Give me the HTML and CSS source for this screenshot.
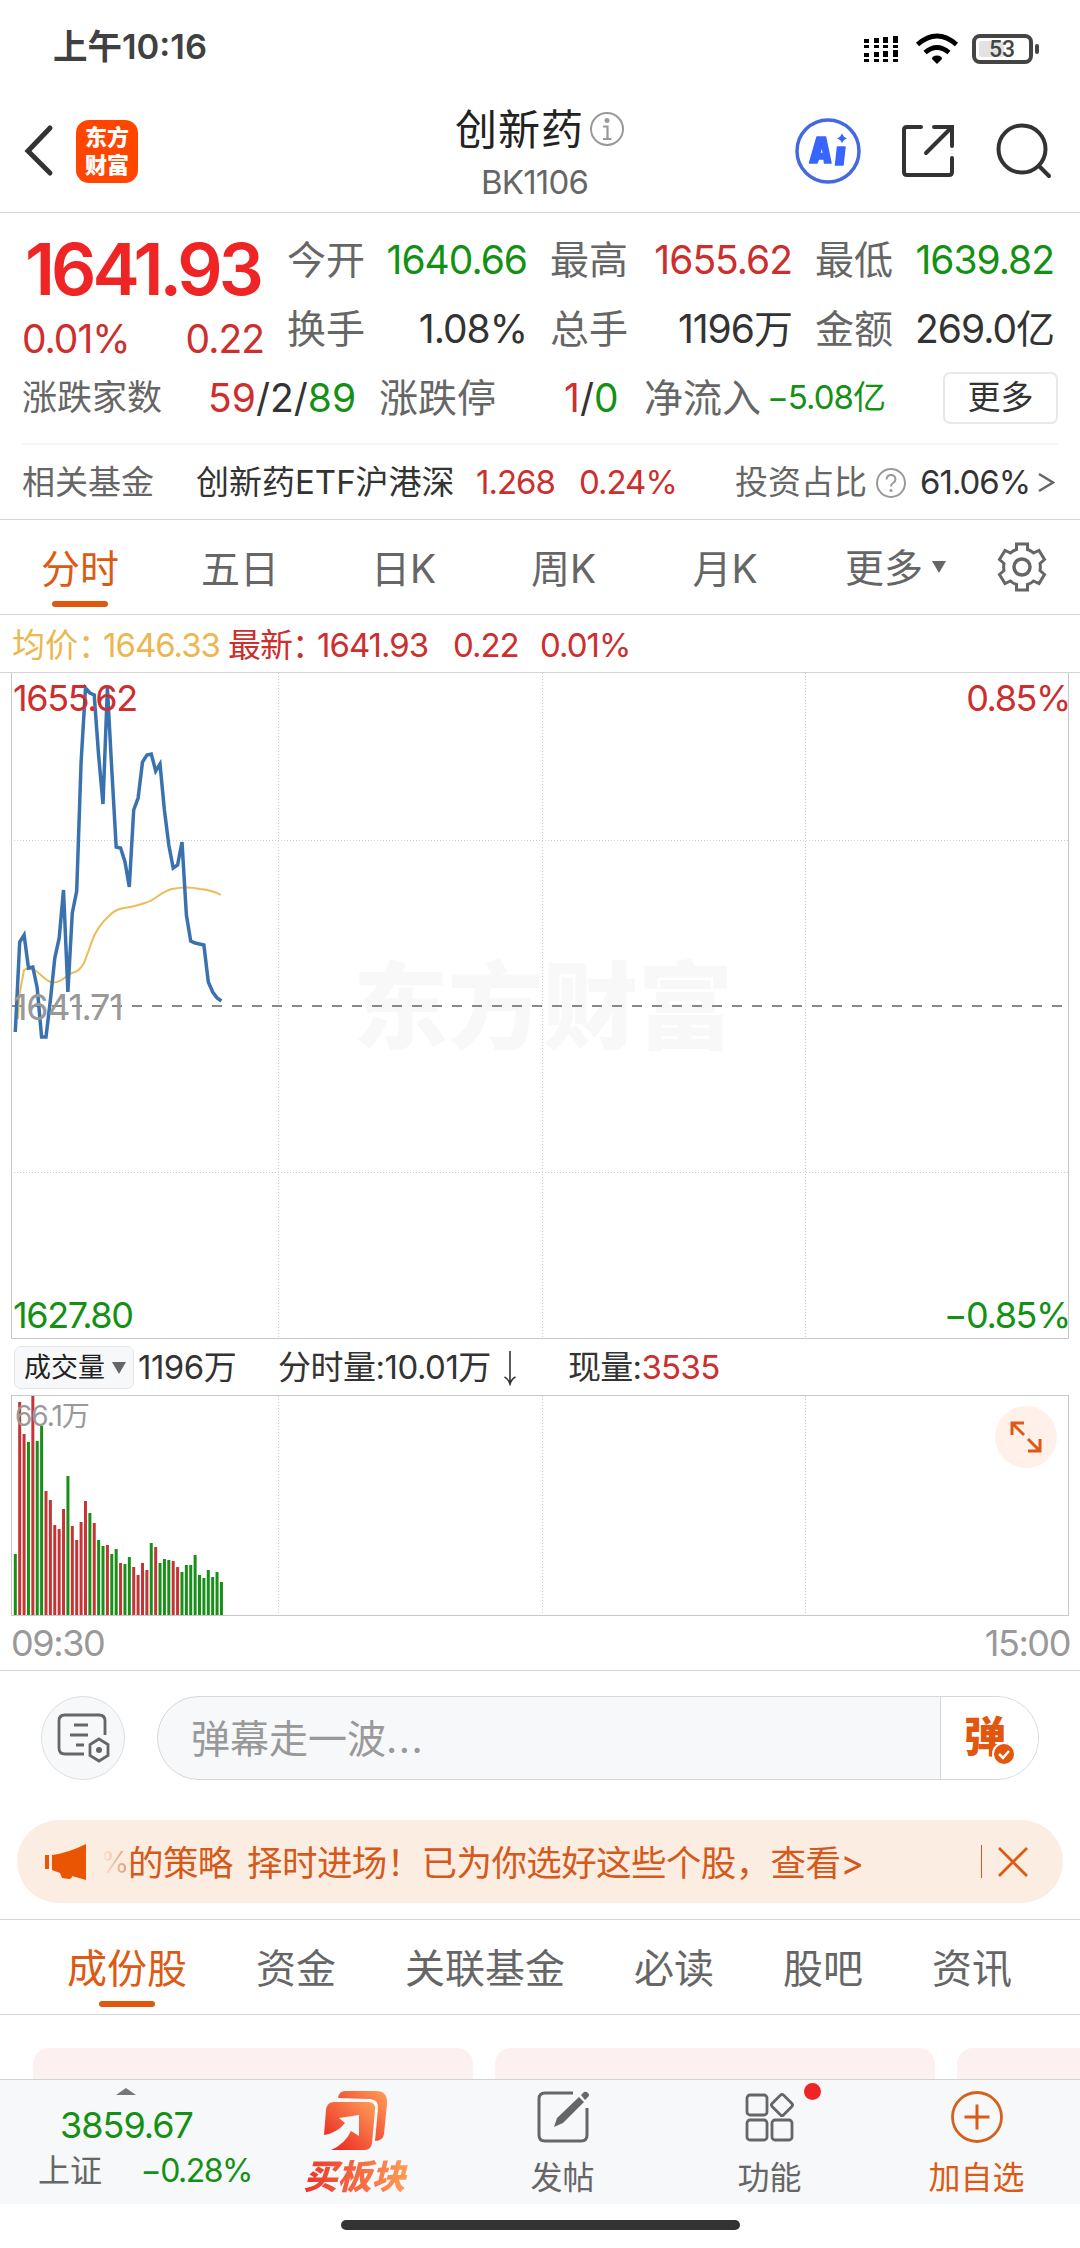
FILE: index.html
```html
<!DOCTYPE html>
<html lang="zh-CN">
<head>
  <meta charset="UTF-8">
  <title>创新药 BK1106</title>
  <link rel="stylesheet" href="styles.css">
</head>
<body>

  <div class="status">
    <span class="time">上午10:16</span>
    <svg class="status-icons" width="180" height="34" viewBox="0 0 180 34">
      <g fill="#000">
        <path d="M1 8h5v4h-5zM1 14h5v3h-5zM1 22h5v4h-5zM1 28h5v3h-5zM11 7h5v5h-5zM11 14h5v3h-5zM11 21h5v5h-5zM11 28h5v3h-5zM20 6h5v6h-5zM20 14h5v3h-5zM20 20h5v6h-5zM20 28h5v3h-5zM30 5h5v7h-5zM30 14h5v3h-5zM30 19h5v7h-5zM30 28h5v3h-5z"/>
        <path d="M74 33l-5-5q0-3.500 5-3.500t5 3.500z"/>
      </g>
      <path d="M54.500 13.500q19.500-17 39 0M62 21.500q12-10 24 0" fill="none" stroke="#000" stroke-width="4.800"/>
      <rect x="111" y="5" width="57" height="26" rx="6" fill="none" stroke="#444" stroke-width="4"/>
      <rect x="116" y="10" width="25" height="16" rx="2" fill="#e2e2e2"/>
      <rect x="172" y="13" width="4" height="10" rx="2" fill="#444"/>
      <text x="139" y="26" class="battery-text">53</text>
    </svg>
  </div>

  <div class="header">
    <svg class="back" width="32" height="54" viewBox="0 0 32 54"><path d="M28 4L6 27l22 22" fill="none" stroke="#333" stroke-width="5" stroke-linecap="round"/></svg>
    <div class="logo">东方<br>财富</div>
    <div class="title">
      <div class="name">创新药
        <svg width="36" height="36" viewBox="0 0 36 36"><circle cx="18" cy="18" r="16" fill="none" stroke="#999" stroke-width="2"/><circle cx="18" cy="9.500" r="2.500" fill="#999"/><path d="M14 15.500h4.500V28M14 28h8.500" fill="none" stroke="#999" stroke-width="2.200"/></svg>
      </div>
      <div class="code">BK1106</div>
    </div>
    <div class="header-icons">
      <svg width="66" height="66" viewBox="0 0 66 66">
        <circle cx="33" cy="33" r="31" fill="none" stroke="#4468e0" stroke-width="3.500"/>
        <path fill="#3765fd" stroke="#3765fd" stroke-width="1.500" stroke-linejoin="round" fill-rule="evenodd" d="M22 19h8.500l5.500 26h-6.500l-.5-4h-5.500l-1.500 4h-7.500zM27 27.500l-2.300 8h3.600zM42.500 29h7.500l-2 18h-7.500z"/>
        <path fill="#3765fd" d="M47 15q1 4 5 5.500q-4 1-5 5q-1-4-5-5q4-1.500 5-5.500z"/>
      </svg>
      <svg width="54" height="54" viewBox="0 0 54 54"><path d="M20 3H6q-3 0-3 3v42q0 3 3 3h42q3 0 3-3V34M33 3h18v19M50 4L25 29" fill="none" stroke="#333" stroke-width="4" stroke-linecap="round"/></svg>
      <svg width="56" height="56" viewBox="0 0 56 56"><circle cx="26" cy="26" r="23.500" fill="none" stroke="#333" stroke-width="4"/><path d="M43 43l10 10" stroke="#333" stroke-width="4" stroke-linecap="round"/></svg>
    </div>
  </div>

  <div class="quote">
    <div class="quote-top">
      <div class="price-box">
        <div class="price">1641.93</div>
        <div class="change red"><span>0.01%</span><span>0.22</span></div>
      </div>
      <div class="col">
        <div class="cell"><label>今开</label><span class="green">1640.66</span></div>
        <div class="cell"><label>换手</label><span>1.08%</span></div>
      </div>
      <div class="col">
        <div class="cell"><label>最高</label><span class="red">1655.62</span></div>
        <div class="cell"><label>总手</label><span>1196万</span></div>
      </div>
      <div class="col">
        <div class="cell"><label>最低</label><span class="green">1639.82</span></div>
        <div class="cell"><label>金额</label><span>269.0亿</span></div>
      </div>
    </div>
    <div class="quote-more">
      <label class="updown">涨跌家数</label>
      <span class="counts"><span class="red">59</span>/2/<span class="green">89</span></span>
      <label class="limit">涨跌停</label>
      <span class="limit-value"><span class="red">1</span>/<span class="green">0</span></span>
      <label>净流入</label>
      <span class="flow green">−5.08亿</span>
      <button class="more-btn">更多</button>
    </div>
    <div class="fund">
      <label>相关基金</label>
      <span class="fund-name">创新药ETF沪港深</span>
      <span class="red fund-price">1.268</span>
      <span class="red fund-change">0.24%</span>
      <label class="ratio">投资占比</label>
      <svg width="32" height="32" viewBox="0 0 32 32"><circle cx="16" cy="16" r="14" fill="none" stroke="#999" stroke-width="2"/><path d="M11.500 12.500q.5-4.500 4.500-4.500t4.500 4q0 2.500-2.500 4q-2 1.300-2 3.500" fill="none" stroke="#999" stroke-width="2"/><circle cx="16" cy="23.500" r="1.500" fill="#999"/></svg>
      <span class="fund-ratio">61.06%</span>
      <svg class="arrow" width="17" height="22" viewBox="0 0 17 22"><path d="M1 2l14 8.500L1 19" fill="none" stroke="#666" stroke-width="2.500"/></svg>
    </div>
  </div>

  <div class="period-tabs">
    <div class="tab active">分时</div>
    <div class="tab">五日</div>
    <div class="tab">日K</div>
    <div class="tab">周K</div>
    <div class="tab">月K</div>
    <div class="tab tab-more">更多<i class="caret"></i></div>
    <svg class="gear" width="50" height="52" viewBox="0 0 50 52">
      <path d="M19.500 3h11v5.500q3.500 1 6 3.500l5.500-2.500l5.500 9l-4.500 4q.7 3.500 0 7l4.500 4l-5.500 9l-5.500-2.500q-2.500 2.500-6 3.500v5.500h-11v-5.500q-3.500-1-6-3.500l-5.500 2.500l-5.500-9l4.500-4q-.7-3.500 0-7l-4.500-4l5.500-9l5.500 2.500q2.500-2.500 6-3.500z" fill="none" stroke="#666" stroke-width="3"/>
      <circle cx="25" cy="26" r="8" fill="none" stroke="#666" stroke-width="3.500"/>
    </svg>
  </div>

  <div class="legend">
    <span class="yellow">均价：</span><span class="yellow avg">1646.33</span>
    <span class="red">最新：</span><span class="red last">1641.93</span><span class="red diff">0.22</span><span class="red">0.01%</span>
  </div>

  <div class="chart">
    <div class="watermark">东方财富</div>
    <svg width="1057" height="666" viewBox="0 0 1057 666">
      <path class="grid-line" d="M266.500 0V666M530.500 0V666M793.500 0V666M2 167.500H1056M2 499.500H1056"/>
      <path class="base-line" d="M0 333H1056"/>
      <path class="avg-line" id="avgLine" d="M6 346L7 324L12 297Q16 294 24 298C30 302 34 309 41 309.500C50 310 54 302 60 300Q67 299 72 290L82 263Q88 251 96 244Q103 236 112 235T133 230C144 227 148 219 160 216Q175 213 188 216Q200 217 209 222"/>
      <path class="price-line" id="priceLine"/>
    </svg>
    <span class="label top-left red">1655.62</span>
    <span class="label mid-left">1641.71</span>
    <span class="label bottom-left green">1627.80</span>
    <span class="label top-right red">0.85%</span>
    <span class="label bottom-right green">−0.85%</span>
  </div>

  <div class="volume-info">
    <span class="chip">成交量<i class="caret"></i></span>
    <span class="vol-total">1196万</span>
    <span class="vol-minute">分时量:10.01万</span>
    <svg class="down" width="14" height="36" viewBox="0 0 14 36"><path d="M7 1v32M1.500 27q4 2 5.500 7q1.500-5 5.500-7" fill="none" stroke="#333" stroke-width="1.600"/></svg>
    <span class="vol-now">现量:<span class="red">3535</span></span>
  </div>

  <div class="volume">
    <svg id="volume" width="1057" height="219" viewBox="0 0 1057 219">
      <path class="grid-line" d="M266.500 0V219M530.500 0V219M793.500 0V219"/>
    </svg>
    <span class="vol-label">66.1万</span>
    <div class="expand">
      <svg width="32" height="32" viewBox="0 0 32 32"><path d="M2 14V2h12M2 2l12 12M30 18v12H18M30 30L18 18" fill="none" stroke="#dd5a14" stroke-width="3"/></svg>
    </div>
  </div>
  <div class="hours"><span>09:30</span><span>15:00</span></div>

  <div class="danmu">
    <div class="danmu-set">
      <svg width="54" height="52" viewBox="0 0 54 52">
        <path d="M28 42H9q-6 0-6-6V9q0-6 6-6h34q6 0 6 6v14M18 13h14M14 23h18M20 33h8" fill="none" stroke="#666" stroke-width="2.800"/>
        <path d="M43 27l9 5.500v11L43 49l-9-5.500v-11z" fill="none" stroke="#666" stroke-width="2.800"/><circle cx="43" cy="38" r="3" fill="#666"/>
      </svg>
    </div>
    <div class="danmu-input">
      <span>弹幕走一波<span class="dots">...</span></span>
      <div class="danmu-btn">弹
        <svg class="check" width="24" height="24" viewBox="0 0 24 24"><circle cx="12" cy="12" r="11" fill="#e2560d" stroke="#fff" stroke-width="2"/><path d="M7 12l4 4l6-7" fill="none" stroke="#fff" stroke-width="2.500"/></svg>
      </div>
    </div>
  </div>

  <div class="banner">
    <svg width="44" height="40" viewBox="0 0 44 40"><path d="M1 13h4v14H1zM8 13q16-2 34-11v36l-14-4q0 3-3 3l-7-1l-2-5l-8-3z" fill="#ea5504"/></svg>
    <span class="fade">%</span><span class="banner-text">的策略 择时进场！已为你选好这些个股，查看&gt;</span>
    <i class="bar"></i>
    <svg width="30" height="30" viewBox="0 0 30 30"><path d="M1 1l28 28M29 1L1 29" stroke="#dd5a14" stroke-width="2.800"/></svg>
  </div>

  <div class="content-tabs">
    <div class="tab active">成份股</div>
    <div class="tab">资金</div>
    <div class="tab">关联基金</div>
    <div class="tab">必读</div>
    <div class="tab">股吧</div>
    <div class="tab">资讯</div>
  </div>

  <div class="cards">
    <div class="card"></div>
    <div class="card"></div>
    <div class="card"></div>
  </div>

  <div class="nav">
    <div class="index">
      <i class="up"></i>
      <div class="index-value green">3859.67</div>
      <div class="index-row"><span>上证</span><span class="green index-change">−0.28%</span></div>
    </div>
    <div class="nav-item buy">
      <svg width="66" height="62" viewBox="0 0 66 62">
        <defs><linearGradient id="g" x1="0" y1="1" x2="1" y2="0"><stop offset="0.150" stop-color="#ec3026"/><stop offset="1" stop-color="#ff9f58"/></linearGradient></defs>
        <path d="M15 8q1-7 7-7h31q12 0 11 13l-3 30q-1 7-9 7l3-32q1-10-9-10z" fill="url(#g)"/>
        <path d="M3 20q1-8 8-8h34q8 0 7 8l-3 33q-1 7-7 7H8Q22 54 28 41l8 5V25l-20 3l6 5Q14 43 1 45z" fill="url(#g)"/>
      </svg>
      <span class="buy-text">买板块</span>
    </div>
    <div class="nav-item">
      <svg width="54" height="54" viewBox="0 0 54 54"><path d="M37 3H9q-6 0-6 6v36q0 6 6 6h36q6 0 6-6V18" fill="none" stroke="#666" stroke-width="3"/><path d="M43 7l5 5l-21 21l-9 4l3-9zM45 5l3-3q2-1 4 1t0 4l-3 3z" fill="#666"/></svg>
      <span>发帖</span>
    </div>
    <div class="nav-item">
      <svg width="54" height="54" viewBox="0 0 54 54"><g fill="none" stroke="#666" stroke-width="2.800"><rect x="4" y="5" width="20" height="20" rx="3"/><rect x="4" y="30" width="20" height="20" rx="3"/><rect x="29" y="30" width="20" height="20" rx="3"/><rect x="31" y="7" width="16" height="16" rx="2" transform="rotate(45 39 15)"/></g></svg>
      <span>功能</span>
      <i class="dot"></i>
    </div>
    <div class="nav-item add">
      <svg width="54" height="54" viewBox="0 0 54 54"><circle cx="27" cy="27" r="24.500" fill="none" stroke="#d4621f" stroke-width="2.800"/><path d="M27 14.500v25M14.500 27h25" stroke="#dd5a14" stroke-width="3"/></svg>
      <span>加自选</span>
    </div>
  </div>
  <div class="home"></div>

  <script src="chart.js"></script>
</body>
</html>
```

FILE: styles.css
```css
body {
  margin: 0;
  width: 1080px;
  height: 2248px;
  overflow: hidden;
  background: #fff;
  color: #333;
  font-family: Inter, "Noto Sans CJK SC", sans-serif;
  font-size: 39px;
  line-height: 1;
}

* {
  box-sizing: border-box;
}

svg {
  display: block;
  flex: none;
}

span, label {
  white-space: nowrap;
}

label {
  color: #666;
}

.red { color: #cd2e2e; }
.green { color: #149114; }
.yellow { color: #ecb750; }

/* status bar */
.status {
  height: 90px;
  padding: 5px 37px 0 53px;
  display: flex;
  align-items: center;
  justify-content: space-between;
}

.time {
  font-size: 34.5px;
  font-weight: 600;
  color: #404040;
}

.battery-text {
  font-family: Roboto, sans-serif;
  font-size: 23px;
  font-weight: 500;
  text-anchor: middle;
  fill: #444;
}

/* header */
.header {
  height: 123px;
  border-bottom: 1px solid #d5d5d5;
  display: flex;
  align-items: center;
  padding: 0 28px 0 22px;
}

.back {
  margin-right: 22px;
}

.logo {
  width: 62px;
  height: 63px;
  border-radius: 13px;
  background: #ff4500;
  color: #fff;
  font-size: 22px;
  font-weight: 900;
  line-height: 28px;
  padding-top: 3px;
  text-align: center;
}

.title {
  width: 250px;
  margin-left: 272px;
  padding: 3px 0 0 45px;
}

.name {
  display: flex;
  align-items: center;
  font-size: 42px;
  letter-spacing: 1px;
  line-height: 56px;
  color: #222;
}

.name svg {
  margin: -2px 0 0 5px;
}

.code {
  font-size: 33px;
  letter-spacing: -0.8px;
  line-height: 44px;
  padding: 2px 0 0 26px;
  color: #666;
}

.header-icons {
  margin-left: auto;
  display: flex;
  align-items: center;
  gap: 40px;
}

.header-icons svg:nth-child(2) {
  margin-right: 1px;
}

/* quote */
.quote {
  height: 307px;
  padding: 12px 22px 0;
  border-bottom: 1px solid #d5d5d5;
}

.quote-top {
  display: grid;
  grid-template-columns: 242px 240px 242px 239px;
  column-gap: 23px;
  height: 138px;
}

.price-box {
  padding-top: 10px;
}

.price {
  height: 69px;
  line-height: 69px;
  padding-left: 3px;
  font-size: 71px;
  font-weight: 600;
  letter-spacing: -4px;
  color: #ef2424;
}

.change, .cell {
  display: flex;
  justify-content: space-between;
  line-height: 69px;
}

.change span, .cell span, .fund-price, .fund-change, .fund-ratio, .legend span + span, .index-change, .flow {
  letter-spacing: -1px;
}

.quote-more {
  height: 69px;
  display: flex;
  align-items: center;
}

.updown {
  width: 186px;
  font-size: 35px;
}

.counts {
  width: 171px;
}

.limit {
  width: 185px;
}

.limit-value {
  width: 80px;
}

.flow {
  font-size: 33px;
  margin-left: 6px;
}

.more-btn {
  width: 115px;
  height: 52px;
  margin-left: auto;
  border: 2px solid #e6e8ea;
  border-radius: 7px;
  background: #fff;
  font: inherit;
  font-size: 33px;
  color: #333;
  padding: 0;
}

.fund {
  margin-top: 11px;
  height: 76px;
  padding-top: 1px;
  border-top: 2px solid #f5f5f5;
  display: flex;
  align-items: center;
  font-size: 33px;
}

.fund-name { width: 255px; margin-left: 42px; }
.fund-price { width: 79px; margin: 0 24px 0 25px; }
.ratio { margin-left: auto; }
.fund svg { margin: 0 13px 0 8px; }
.fund-ratio { width: 108px; }
.fund .arrow { margin: 0 3px 0 10px; }

/* tabs */
.period-tabs, .content-tabs {
  height: 95px;
  display: flex;
  border-bottom: 1px solid #d5d5d5;
  line-height: 97px;
  color: #666;
}

.period-tabs .tab {
  width: 160px;
  text-align: center;
}

.period-tabs .tab:nth-child(3) { width: 167px; }
.period-tabs .tab:nth-child(4) { width: 153px; }
.period-tabs .tab:nth-child(5) { width: 170px; }

.tab.active {
  color: #dd5a14;
  display: flex;
  flex-direction: column;
  align-items: center;
}

.tab.active::after {
  content: "";
  width: 56px;
  height: 6px;
  margin-top: -16px;
  border-radius: 3px;
  background: #e0570e;
}

.period-tabs .tab-more {
  display: flex;
  align-items: center;
  justify-content: center;
  width: 171px;
}

.caret {
  border: 7px solid transparent;
  border-top: 12px solid #666;
  border-bottom: 0;
  margin-left: 9px;
}

.gear {
  margin: 21px 0 0 16px;
}

.legend {
  height: 58px;
  padding: 3px 0 0 12px;
  border-bottom: 1px solid #d5d5d5;
  display: flex;
  align-items: center;
  font-size: 33px;
}

.avg { width: 125px; margin-left: -8px; }
.last { width: 113px; margin-left: -7px; }
.diff { width: 64px; margin: 0 23px; }

/* chart */
.chart {
  position: relative;
  width: 1058px;
  height: 666px;
  margin-left: 11px;
  border: 1px solid #c8c8c8;
  border-top: 0;
}

.watermark {
  position: absolute;
  left: 341px;
  top: 283px;
  font-size: 95px;
  font-weight: 900;
  line-height: 104px;
  color: #f8f8f8;
}

.chart svg {
  position: relative;
}

.grid-line {
  fill: none;
  stroke: #ccc;
  stroke-dasharray: 1 2;
}

.base-line {
  stroke: #888;
  stroke-width: 2;
  stroke-dasharray: 10 10;
}

.price-line, .avg-line {
  fill: none;
  stroke: #3a72b0;
  stroke-width: 3.5;
}

.avg-line {
  stroke: #edbb58;
  stroke-width: 2;
}

.label {
  position: absolute;
  font-size: 36px;
  letter-spacing: -1.4px;
}

.top-left { left: 1px; top: 7px; }
.mid-left { left: 1px; top: 316px; color: #999; }
.bottom-left { left: 1px; top: 624px; }
.top-right { right: -2px; top: 7px; }
.bottom-right { right: -2px; top: 624px; }

.volume-info {
  height: 56px;
  padding: 1px 0 0 14px;
  display: flex;
  align-items: center;
  font-size: 33px;
}

.chip {
  width: 120px;
  height: 43px;
  padding-left: 9px;
  display: flex;
  align-items: center;
  border: 1px solid #e3e5e8;
  border-radius: 7px;
  background: #f7f8fa;
  font-size: 27px;
  color: #222;
}

.chip .caret {
  margin-left: 7px;
}

.vol-total { margin-left: 4px; width: 140px; letter-spacing: -0.5px; }
.vol-minute { width: 213px; letter-spacing: -0.5px; }
.vol-now { letter-spacing: -0.7px; }
.down { margin: 0 51px 0 12px; }

.volume {
  position: relative;
  width: 1058px;
  height: 221px;
  margin-left: 11px;
  border: 1px solid #c8c8c8;
}

.vol-label {
  position: absolute;
  left: 3px;
  top: 6px;
  font-size: 28px;
  letter-spacing: -1px;
  color: #999;
}

.expand {
  position: absolute;
  right: 11px;
  top: 10px;
  width: 62px;
  height: 62px;
  border-radius: 50%;
  background: #fff1ea;
  display: flex;
  align-items: center;
  justify-content: center;
}

.bar-up { fill: #c63535; }
.bar-down { fill: #189018; }

.hours {
  height: 55px;
  padding: 0 10px 0 11px;
  border-bottom: 1px solid #d5d5d5;
  display: flex;
  align-items: center;
  justify-content: space-between;
  font-size: 36px;
  letter-spacing: -1.4px;
  color: #999;
}

/* comment row */
.danmu {
  height: 149px;
  padding: 25px 41px 0;
  display: flex;
  gap: 32px;
}

.danmu-set {
  width: 84px;
  height: 84px;
  border: 1px solid #dcdfe2;
  border-radius: 50%;
  background: #f7f8fa;
  display: flex;
  align-items: center;
  justify-content: center;
}

.danmu-input {
  flex: 1;
  height: 84px;
  padding-left: 33px;
  border: 1px solid #d5d8da;
  border-radius: 42px;
  background: #f7f8fa;
  overflow: hidden;
  display: flex;
  align-items: center;
  justify-content: space-between;
  color: #999;
}

.dots {
  letter-spacing: 1.5px;
}

.danmu-btn {
  position: relative;
  width: 98px;
  height: 84px;
  border-left: 1px solid #d5d8da;
  background: #fff;
  padding-left: 23px;
  line-height: 82px;
  font-size: 42px;
  font-weight: 900;
  color: #e2560d;
}

.check {
  position: absolute;
  left: 51px;
  top: 46px;
}

.banner {
  height: 83px;
  margin: 0 17px;
  padding: 0 35px 0 27px;
  border-radius: 42px;
  background: #fcede3;
  display: flex;
  align-items: center;
  font-size: 35.5px;
  color: #d5591a;
}

.banner-text {
  padding-top: 4px;
  word-spacing: 5px;
  letter-spacing: -0.6px;
}

.fade {
  width: 28px;
  margin-left: 12px;
  font-size: 30px;
  background: linear-gradient(90deg, #fcede3, #e59a70);
  -webkit-background-clip: text;
  color: transparent;
}

.bar {
  width: 1px;
  height: 33px;
  margin: 0 16px 0 auto;
  background: #d5591a;
}

.content-tabs {
  height: 96px;
  margin-top: 16px;
  border-top: 1px solid #d5d5d5;
  padding-left: 67px;
  font-size: 40px;
  gap: 69px;
}

.cards {
  height: 64px;
  padding: 33px 0 0 33px;
  display: flex;
  gap: 22px;
  overflow: hidden;
}

.card {
  flex: none;
  width: 440px;
  height: 120px;
  border-radius: 16px;
  background: #fdf0f0;
}

/* bottom bar */
.nav {
  height: 125px;
  border-top: 1px solid #d0d3d5;
  background: #f7f8fa;
  display: flex;
}

.index {
  width: 252px;
  padding-top: 8px;
}

.up {
  display: block;
  width: 0;
  margin-left: 116px;
  border: 10px solid transparent;
  border-top: 0;
  border-bottom: 7px solid #777;
}

.index-value {
  padding: 12px 0 0 60px;
  font-size: 36px;
  line-height: 36px;
  letter-spacing: -1px;
}

.index-row {
  display: flex;
  align-items: center;
  justify-content: space-between;
  padding: 12px 0 0 38px;
  font-size: 32px;
  color: #666;
}

.index-change {
  letter-spacing: -1.5px;
}

.nav-item {
  position: relative;
  width: 207px;
  padding-top: 10px;
  display: flex;
  flex-direction: column;
  align-items: center;
  gap: 18px;
  font-size: 32px;
  color: #666;
}

.nav-item.buy {
  gap: 8px;
}

.buy-text {
  font-size: 34px;
  font-weight: 900;
  font-style: italic;
  padding: 0 5px;
  margin-right: 2px;
  background: linear-gradient(90deg, #e8302a, #ff9f58);
  -webkit-background-clip: text;
  color: transparent;
}

.add {
  color: #dd5a14;
}

.dot {
  position: absolute;
  left: 138px;
  top: 3px;
  width: 17px;
  height: 17px;
  border-radius: 50%;
  background: #f02424;
}

.home {
  width: 399px;
  height: 10px;
  margin: 16px auto 0;
  border-radius: 5px;
  background: #333;
}
```

FILE: chart.js
```javascript
const step = 4.386;
const prices = [359, 269, 262, 295, 294, 315, 364, 364, 327, 285, 265, 217, 319, 240, 218, 89,
  15, 20, 22, 82, 131, 15, 97, 174, 175, 189, 214, 137, 125, 89, 82, 81,
  98, 91, 137, 172, 195, 192, 169, 242, 268, 270, 271, 272, 309, 319, 325, 328];
const volumes = [61, 213, 181, 173, 219, 174, 189, 124, 115, 90, 86, 106, 139, 89, 75, 93,
  114, 102, 92, 75, 69, 70, 61, 66, 52, 51, 58, 48, 40, 52, 45, 72,
  68, 52, 56, 55, 54, 48, 43, 50, 50, 60, 40, 37, 45, 38, 43, 33];
// u = up, d = down, one per minute
const dirs = 'duududduuuuuduuuududdudduddu' + 'uuududdduuddddddddddd';

document.getElementById('priceLine').setAttribute('d',
  'M' + prices.map((y, i) => (3.3 + i * step).toFixed(1) + ' ' + y).join('L'));

const svg = document.getElementById('volume');
volumes.forEach((h, i) => {
  const bar = document.createElementNS('http://www.w3.org/2000/svg', 'rect');
  bar.setAttribute('x', 1.8 + i * step);
  bar.setAttribute('y', 219 - h);
  bar.setAttribute('width', 3);
  bar.setAttribute('height', h);
  bar.setAttribute('class', dirs[i] === 'u' ? 'bar-up' : 'bar-down');
  svg.appendChild(bar);
});
```
